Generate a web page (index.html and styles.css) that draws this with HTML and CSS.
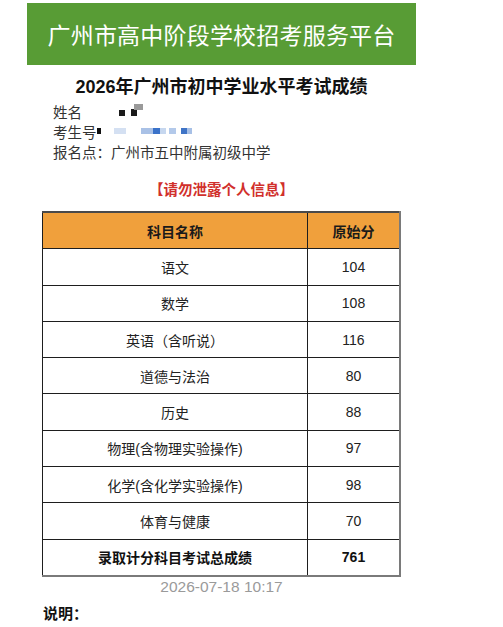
FILE: index.html
```html
<!DOCTYPE html>
<html lang="zh-CN">
<head>
<meta charset="utf-8">
<title>成绩查询</title>
<link rel="stylesheet" href="styles.css">
</head>
<body>
<div class="page">
  <header class="banner">广州市高中阶段学校招考服务平台</header>
  <h1 class="title">2026年广州市初中学业水平考试成绩</h1>
  <div class="info">
    <div class="info-row">
      <span class="label">姓名</span>
      <span class="mask mask-name">
        <i class="blk b1"></i><i class="blk b2"></i><i class="blk b3"></i>
      </span>
    </div>
    <div class="info-row">
      <span class="label">考生号</span>
      <span class="mask mask-id">
        <i class="blk k0"></i><i class="blk k1"></i><i class="blk k2"></i><i class="blk k3"></i><i class="blk k4"></i><i class="blk k5"></i><i class="blk k6"></i><i class="blk k7"></i>
      </span>
    </div>
    <div class="info-row">
      <span class="label">报名点：</span>
      <span class="value">广州市五中附属初级中学</span>
    </div>
  </div>
  <p class="warn">【请勿泄露个人信息】</p>
  <table class="scores">
    <thead>
      <tr><th class="c-sub">科目名称</th><th class="c-num">原始分</th></tr>
    </thead>
    <tbody>
      <tr><td>语文</td><td>104</td></tr>
      <tr><td>数学</td><td>108</td></tr>
      <tr><td>英语（含听说）</td><td>116</td></tr>
      <tr><td>道德与法治</td><td>80</td></tr>
      <tr><td>历史</td><td>88</td></tr>
      <tr><td>物理(含物理实验操作)</td><td>97</td></tr>
      <tr><td>化学(含化学实验操作)</td><td>98</td></tr>
      <tr><td>体育与健康</td><td>70</td></tr>
      <tr class="total"><td>录取计分科目考试总成绩</td><td>761</td></tr>
    </tbody>
  </table>
  <p class="time">2026-07-18 10:17</p>
  <p class="note">说明：</p>
</div>
</body>
</html>
```

FILE: styles.css
```css
html, body {
  margin: 0;
  padding: 0;
  background: #ffffff;
}
body {
  font-family: "Liberation Sans", "Noto Sans CJK SC", sans-serif;
  color: #222;
}
.page {
  width: 389px;
  margin-left: 27px;
  padding-top: 3px;
}
.banner {
  height: 62px;
  background: #589c35;
  color: #ffffff;
  font-size: 23px;
  display: flex;
  align-items: center;
  justify-content: center;
  letter-spacing: 0.2px;
}
.title {
  margin: 10px 0 0;
  font-size: 18px;
  line-height: 24px;
  font-weight: bold;
  text-align: center;
  color: #111;
}
.info {
  padding-left: 26px;
  margin-top: 2px;
}
.info-row {
  display: flex;
  align-items: center;
  height: 20px;
  font-size: 14.5px;
  color: #333;
}
.mask {
  position: relative;
  display: inline-block;
  height: 20px;
}
.mask-name { width: 70px; margin-left: 4px; }
.mask-id { width: 110px; }
.blk {
  position: absolute;
  display: block;
}
.b1 { left: 33px; top: 9px; width: 6px; height: 6px; background: #1a1a1a; }
.b2 { left: 45px; top: 8px; width: 6px; height: 7px; background: #1a1a1a; }
.b3 { left: 48px; top: 3px; width: 9px; height: 6px; background: #9a9a9a; }
.k0 { left: 0; top: 7px; width: 4px; height: 6px; background: #111; }
.k1 { left: 17px; top: 7px; width: 12px; height: 6px; background: #d4e0f2; }
.k2 { left: 44px; top: 7px; width: 12px; height: 6px; background: #a9c1e6; }
.k3 { left: 56px; top: 7px; width: 7px; height: 6px; background: #3a72c9; }
.k4 { left: 63px; top: 7px; width: 6px; height: 6px; background: #c6d7ef; }
.k5 { left: 72px; top: 7px; width: 7px; height: 6px; background: #b3c9ea; }
.k6 { left: 84px; top: 7px; width: 6px; height: 6px; background: #3f74c6; }
.k7 { left: 90px; top: 7px; width: 5px; height: 6px; background: #a7c0e6; }
.value {
  color: #333;
}
.warn {
  margin: 19px 0 0;
  line-height: 20px;
  font-size: 14.5px;
  font-weight: bold;
  color: #d1302c;
  text-align: center;
}
.scores {
  margin: 11px auto 0;
  width: 355px;
  border-collapse: collapse;
  table-layout: fixed;
  border-right: 2px solid #7a7a7a;
  border-bottom: 2px solid #7a7a7a;
}
.scores th, .scores td {
  border: 1px solid #1e1e1e;
  text-align: center;
  padding: 0;
  height: 35.3px;
  font-size: 14px;
  color: #222;
}
.scores thead th {
  background: #f0a03c;
  font-weight: bold;
  border-top: 2px solid #4a4a4a;
  color: #1a1a1a;
}
.scores tr > :last-child {
  border-right: 2px solid #7a7a7a;
}
.c-sub { width: 264px; }
.c-num { width: 91px; }
.scores .total td {
  font-weight: bold;
  color: #111;
  border-bottom: 2px solid #7a7a7a;
}
.time {
  margin: 1px 0 0;
  line-height: 18px;
  font-size: 15.5px;
  color: #9a9a9a;
  text-align: center;
}
.note {
  margin: 9px 0 0 16px;
  line-height: 18px;
  font-size: 15px;
  font-weight: bold;
  color: #111;
}
```
